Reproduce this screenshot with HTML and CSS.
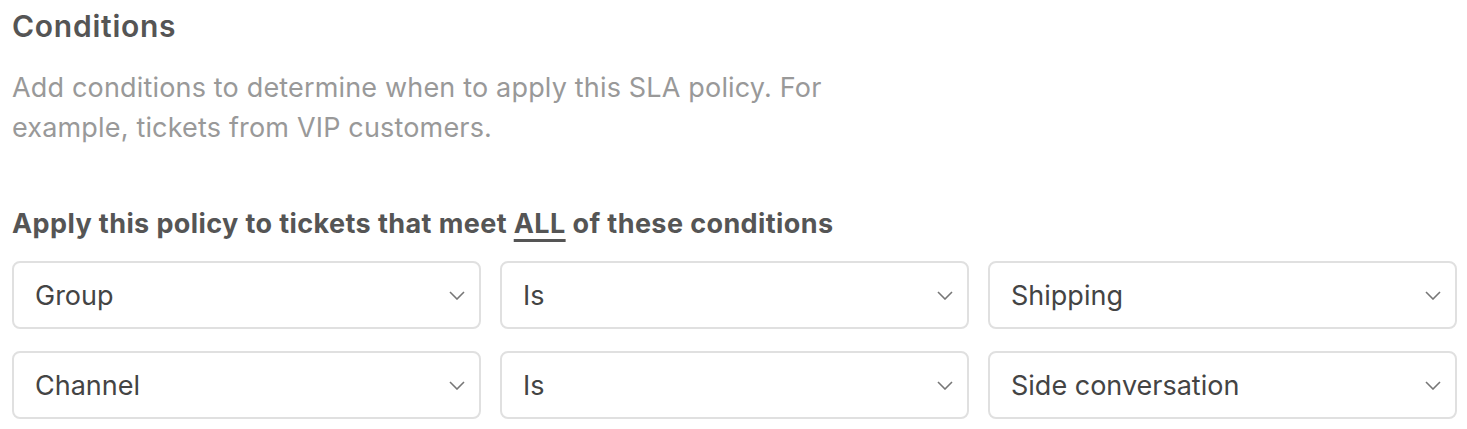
FILE: index.html
```html
<!DOCTYPE html>
<html lang="en">
<head>
  <meta charset="UTF-8">
  <title>SLA policy conditions</title>
  <link rel="stylesheet" href="styles.css">
</head>
<body>
  <section class="conditions">
    <h2>Conditions</h2>
    <p class="hint">Add conditions to determine when to apply this SLA policy. For example, tickets from VIP customers.</p>

    <h3>Apply this policy to tickets that meet <span class="all">ALL</span> of these conditions</h3>

    <div class="rows">
      <div class="row">
        <div class="select"><span>Group</span><svg viewBox="0 0 16 9"><path d="M1 1l7 7 7-7"/></svg></div>
        <div class="select"><span>Is</span><svg viewBox="0 0 16 9"><path d="M1 1l7 7 7-7"/></svg></div>
        <div class="select"><span>Shipping</span><svg viewBox="0 0 16 9"><path d="M1 1l7 7 7-7"/></svg></div>
      </div>
      <div class="row">
        <div class="select"><span>Channel</span><svg viewBox="0 0 16 9"><path d="M1 1l7 7 7-7"/></svg></div>
        <div class="select"><span>Is</span><svg viewBox="0 0 16 9"><path d="M1 1l7 7 7-7"/></svg></div>
        <div class="select"><span>Side conversation</span><svg viewBox="0 0 16 9"><path d="M1 1l7 7 7-7"/></svg></div>
      </div>
    </div>
  </section>
</body>
</html>
```

FILE: styles.css
```css
body {
  margin: 0;
  background-color: #fff;
  font-family: "Inter", "Roboto", sans-serif;
  color: #444;
}

.conditions {
  padding: 6px 10px 0 12px;
}

h2 {
  margin: 0;
  font-size: 30px;
  font-weight: 600;
  letter-spacing: 0.75px;
  line-height: 40px;
  color: #555;
}

.hint {
  margin: 22px 0 0;
  max-width: 840px;
  font-size: 27px;
  letter-spacing: 0.17px;
  line-height: 40px;
  color: #999;
}

h3 {
  margin: 56px 0 0;
  font-size: 27px;
  font-weight: 700;
  letter-spacing: 0.4px;
  line-height: 40px;
  color: #555;
}

.all {
  text-decoration: underline;
  text-decoration-thickness: 3px;
  text-underline-offset: 6px;
}

.rows {
  margin-top: 17px;
  display: flex;
  flex-direction: column;
  gap: 22px;
}

.row {
  display: grid;
  grid-template-columns: repeat(3, 1fr);
  gap: 19px;
}

.select {
  height: 68px;
  box-sizing: border-box;
  border: 2px solid #e0e0e0;
  border-radius: 8px;
  padding: 0 14px 0 21px;
  display: flex;
  align-items: center;
  justify-content: space-between;
  font-size: 27px;
  color: #444;
}

.select svg {
  width: 16px;
  height: 9px;
  fill: none;
  stroke: #777;
  stroke-width: 1.6;
}
```
